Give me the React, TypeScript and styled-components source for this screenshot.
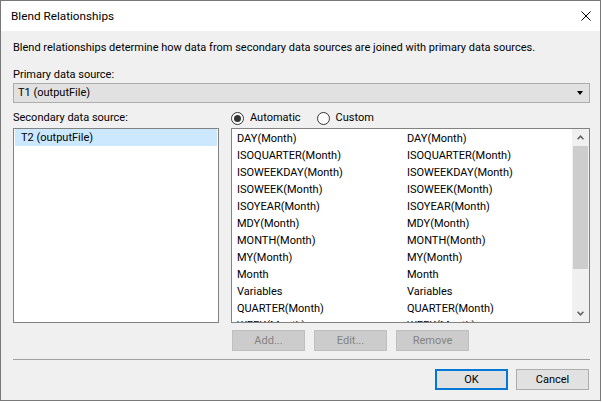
import React from "react";
import styled, { createGlobalStyle, css } from "styled-components";

const FONT = `Roboto, "Liberation Sans", Arial, sans-serif`;

const GlobalStyle = createGlobalStyle`
  html, body { margin: 0; padding: 0; background: #ffffff; }
  body { font-family: ${FONT}; font-size: 11px; color: #000; }
  * { box-sizing: border-box; }
`;

const Window = styled.div`
  width: 601px;
  height: 401px;
  border: 1px solid #777777;
  display: flex;
  flex-direction: column;
  background: #f0f0f0;
`;

const TitleBar = styled.div`
  height: 30px;
  flex: none;
  background: #ffffff;
  display: flex;
  align-items: center;
  justify-content: space-between;
  padding: 0 9px 0 10px;
`;

const Title = styled.span`
  font-size: 11.75px;
  line-height: 16px;
`;

const CloseIcon = styled.svg`
  display: block;
  width: 10px;
  height: 10px;
`;

const Body = styled.div`
  flex: 1;
  display: flex;
  flex-direction: column;
  padding: 9px 10px 0 12px;
`;

const Text = styled.div<{ $mt?: number }>`
  line-height: 16px;
  height: 16px;
  white-space: nowrap;
  margin-top: ${(p) => p.$mt ?? 0}px;
`;

const Combo = styled.div`
  height: 20px;
  border: 1px solid #adadad;
  background: #e1e1e1;
  display: flex;
  align-items: center;
  justify-content: space-between;
  padding: 0 6px 0 4px;
  line-height: 16px;
`;

const ComboArrow = styled.span`
  width: 0;
  height: 0;
  border-left: 3.5px solid transparent;
  border-right: 3.5px solid transparent;
  border-top: 4px solid #000;
`;

const Columns = styled.div`
  margin-top: 7px;
  display: grid;
  grid-template-columns: 206px 359px;
  column-gap: 12px;
`;

const Column = styled.div`
  display: flex;
  flex-direction: column;
`;

const ListBox = styled.div`
  margin-top: 2px;
  height: 195px;
  border: 1px solid #828282;
  background: #ffffff;
  padding: 0 1px;
  overflow: hidden;
`;

const ListItem = styled.div<{ $selected?: boolean }>`
  height: 17px;
  line-height: 17px;
  padding-left: 6px;
  white-space: nowrap;
  ${(p) =>
    p.$selected &&
    css`
      background: #cce8ff;
    `}
`;

const RadioRow = styled.div`
  height: 16px;
  display: flex;
  align-items: center;
  gap: 16px;
`;

const RadioOption = styled.label`
  display: inline-flex;
  align-items: center;
  gap: 6px;
  line-height: 16px;
`;

const RadioCircle = styled.span<{ $checked?: boolean }>`
  width: 13px;
  height: 13px;
  border-radius: 50%;
  border: 1px solid #333333;
  background: #ffffff;
  display: inline-flex;
  align-items: center;
  justify-content: center;
  &::after {
    content: "";
    width: 7px;
    height: 7px;
    border-radius: 50%;
    background: ${(p) => (p.$checked ? "#333333" : "transparent")};
  }
`;

const FieldList = styled.div`
  margin-top: 2px;
  height: 195px;
  border: 1px solid #828282;
  background: #ffffff;
  display: flex;
  overflow: hidden;
`;

const FieldRows = styled.div`
  flex: 1;
  padding: 1px 0 0 5px;
  display: grid;
  grid-template-columns: 170px 1fr;
  grid-auto-rows: 17px;
  align-content: start;
  overflow: hidden;
`;

const FieldCell = styled.div`
  line-height: 17px;
  white-space: nowrap;
`;

const ScrollBar = styled.div`
  width: 17px;
  flex: none;
  background: #f0f0f0;
  display: flex;
  flex-direction: column;
`;

const ScrollArrow = styled.div`
  height: 17px;
  flex: none;
  display: flex;
  align-items: center;
  justify-content: center;
`;

const ScrollThumb = styled.div`
  height: 123px;
  margin: 0 1px;
  background: #cdcdcd;
`;

const ScrollSpacer = styled.div`
  flex: 1;
`;

const ButtonRow = styled.div`
  margin-top: 7px;
  padding-left: 1px;
  display: flex;
  gap: 9px;
`;

const Button = styled.button<{ $disabled?: boolean; $default?: boolean }>`
  width: 73px;
  height: 21px;
  padding: 0;
  font-family: ${FONT};
  font-size: 11px;
  color: #000;
  background: #e1e1e1;
  border: 1px solid #adadad;
  ${(p) =>
    p.$disabled &&
    css`
      background: #cccccc;
      border-color: #bfbfbf;
      color: #838383;
    `}
  ${(p) =>
    p.$default &&
    css`
      border: 2px solid #0078d7;
    `}
`;

const Separator = styled.div`
  margin-top: 8px;
  height: 1px;
  background: #a0a0a0;
`;

const Footer = styled.div`
  margin-top: 9px;
  padding-right: 1px;
  display: flex;
  justify-content: flex-end;
  gap: 8px;
`;

const fields = [
  ["DAY(Month)", "DAY(Month)"],
  ["ISOQUARTER(Month)", "ISOQUARTER(Month)"],
  ["ISOWEEKDAY(Month)", "ISOWEEKDAY(Month)"],
  ["ISOWEEK(Month)", "ISOWEEK(Month)"],
  ["ISOYEAR(Month)", "ISOYEAR(Month)"],
  ["MDY(Month)", "MDY(Month)"],
  ["MONTH(Month)", "MONTH(Month)"],
  ["MY(Month)", "MY(Month)"],
  ["Month", "Month"],
  ["Variables", "Variables"],
  ["QUARTER(Month)", "QUARTER(Month)"],
  ["WEEK(Month)", "WEEK(Month)"],
];

const Chevron = ({ up }: { up?: boolean }) => (
  <svg width="7" height="5" viewBox="0 0 7 5">
    <path
      d={up ? "M0.6 4.2 L3.5 1.2 L6.4 4.2" : "M0.6 0.8 L3.5 3.8 L6.4 0.8"}
      fill="none"
      stroke="#606060"
      strokeWidth="1.5"
    />
  </svg>
);

export default function App() {
  return (
    <>
      <GlobalStyle />
      <Window>
        <TitleBar>
          <Title>Blend Relationships</Title>
          <CloseIcon viewBox="0 0 10 10">
            <path d="M0.5 0.5 L9.5 9.5 M9.5 0.5 L0.5 9.5" stroke="#000" strokeWidth="1" />
          </CloseIcon>
        </TitleBar>
        <Body>
          <Text>
            Blend relationships determine how data from secondary data sources are joined with primary data sources.
          </Text>
          <Text $mt={11}>Primary data source:</Text>
          <Combo>
            <span>T1 (outputFile)</span>
            <ComboArrow />
          </Combo>
          <Columns>
            <Column>
              <Text>Secondary data source:</Text>
              <ListBox>
                <ListItem $selected>T2 (outputFile)</ListItem>
              </ListBox>
            </Column>
            <Column>
              <RadioRow>
                <RadioOption>
                  <RadioCircle $checked />
                  Automatic
                </RadioOption>
                <RadioOption>
                  <RadioCircle />
                  Custom
                </RadioOption>
              </RadioRow>
              <FieldList>
                <FieldRows>
                  {fields.map(([a, b], i) => (
                    <React.Fragment key={i}>
                      <FieldCell>{a}</FieldCell>
                      <FieldCell>{b}</FieldCell>
                    </React.Fragment>
                  ))}
                </FieldRows>
                <ScrollBar>
                  <ScrollArrow>
                    <Chevron up />
                  </ScrollArrow>
                  <ScrollThumb />
                  <ScrollSpacer />
                  <ScrollArrow>
                    <Chevron />
                  </ScrollArrow>
                </ScrollBar>
              </FieldList>
              <ButtonRow>
                <Button $disabled>Add...</Button>
                <Button $disabled>Edit...</Button>
                <Button $disabled>Remove</Button>
              </ButtonRow>
            </Column>
          </Columns>
          <Separator />
          <Footer>
            <Button $default>OK</Button>
            <Button>Cancel</Button>
          </Footer>
        </Body>
      </Window>
    </>
  );
}
